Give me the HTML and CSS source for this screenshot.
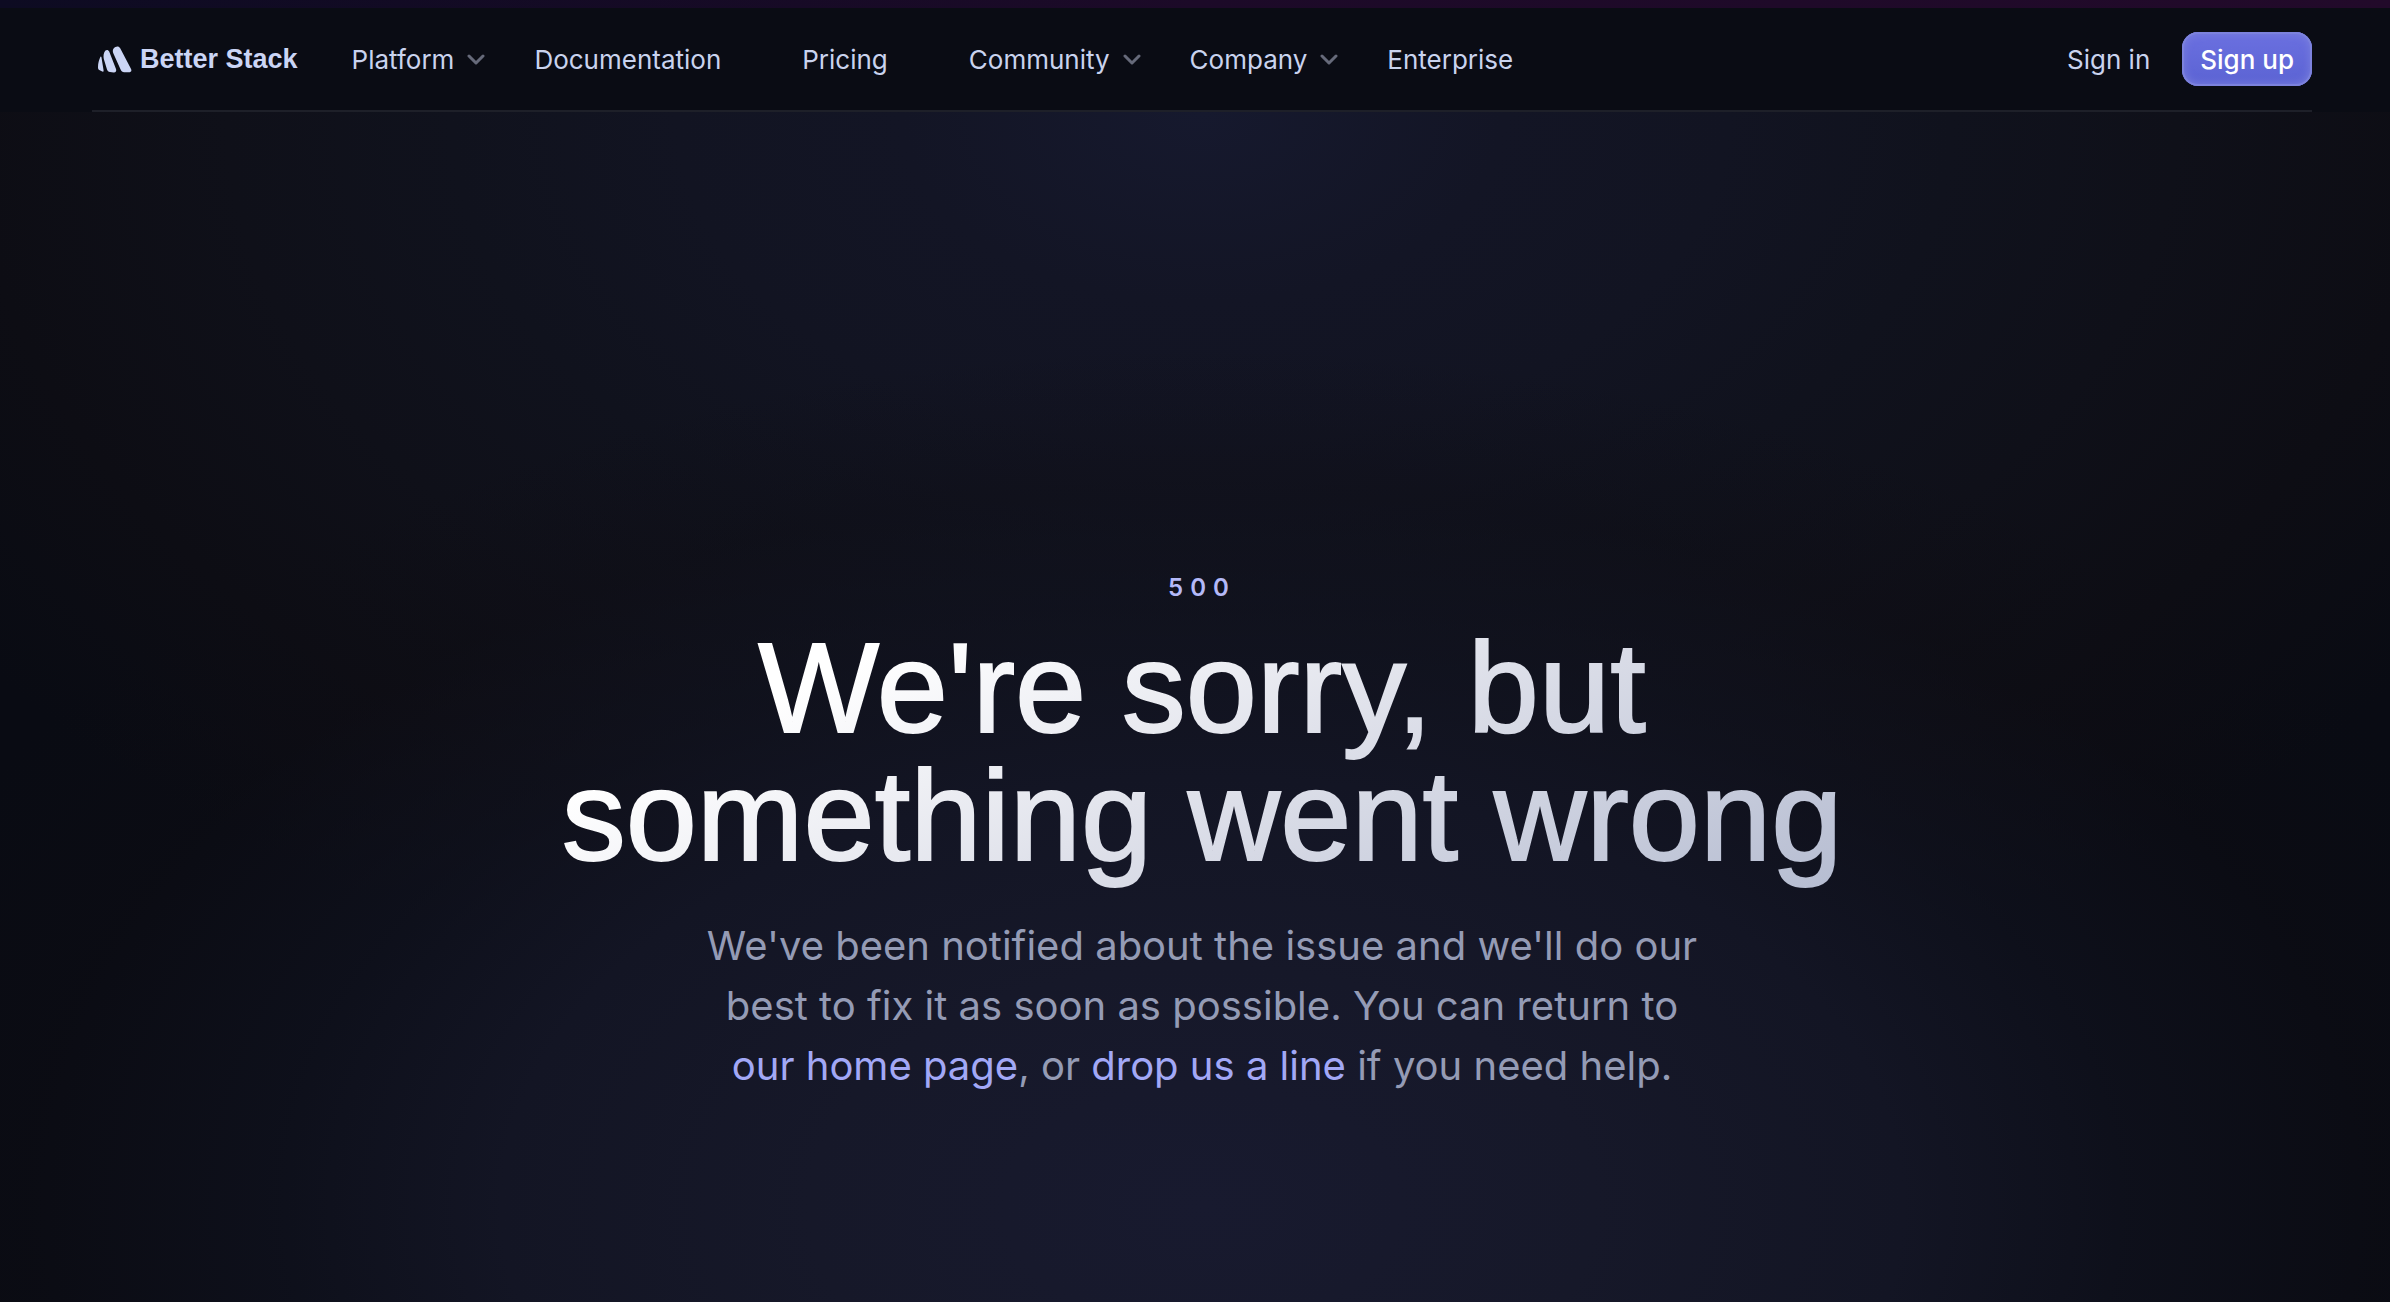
FILE: index.html
```html
<!DOCTYPE html>
<html lang="en">
<head>
    <meta charset="UTF-8">
    <meta name="viewport" content="width=device-width, initial-scale=1.0">
    <title>Better Stack</title>
    <link rel="stylesheet" href="styles.css">
</head>
<body>
    <div class="top-strip"></div>

    <header class="header">
        <div class="header-inner">
            <a href="/" class="logo">
                <svg class="logo-mark" viewBox="0 0 34 27" fill="currentColor" aria-hidden="true">
                    <path d="M2.200 11.200C2.600 10.200 3.400 10.400 3.500 11.400L5.600 24.400C5.700 25.600 5 26 4.200 25.600L1.200 24C.2 23.400 0 22.400 0 21C0 17 1 14 2.200 11.200Z"/>
                    <path d="M7.200 4.800C8.600 3.400 10.400 3.800 11.200 5.600L18 23C18.800 25 17.600 26.600 15.600 26.400L12 26C10.400 25.800 9.600 25 9 23.400L5.800 13C5.200 10 5.600 6.800 7.200 4.800Z"/>
                    <path d="M17.400 1C19.200 0 21 .2 22.200 2.200L32.800 22.600C34.200 25 33 26.200 30.600 26.200H26.200C24.400 26.200 23.400 25.400 22.600 23.600L15.400 7.400C14.200 4.800 14.800 2.600 17.400 1Z"/>
                </svg>
                <span>Better Stack</span>
            </a>
            <nav class="nav">
                <button type="button" class="nav-item has-menu">Platform
                    <svg class="chevron" viewBox="0 0 18 12" aria-hidden="true"><path d="M2 2l7 7 7-7"/></svg>
                </button>
                <a href="/docs" class="nav-item">Documentation</a>
                <a href="/pricing" class="nav-item">Pricing</a>
                <button type="button" class="nav-item has-menu">Community
                    <svg class="chevron" viewBox="0 0 18 12" aria-hidden="true"><path d="M2 2l7 7 7-7"/></svg>
                </button>
                <button type="button" class="nav-item has-menu">Company
                    <svg class="chevron" viewBox="0 0 18 12" aria-hidden="true"><path d="M2 2l7 7 7-7"/></svg>
                </button>
                <a href="/enterprise" class="nav-item">Enterprise</a>
            </nav>
            <div class="account">
                <a href="/sign-in" class="sign-in">Sign in</a>
                <a href="/sign-up" class="sign-up">Sign up</a>
            </div>
        </div>
    </header>

    <main class="error">
        <p class="error-code">500</p>
        <h1 class="error-title">We're sorry, but<br>something went wrong</h1>
        <p class="error-text">
            We've been notified about the issue and we'll do our<br>
            best to fix it as soon as possible. You can return to<br>
            <a href="/">our home page</a>, or <a href="/contact">drop us a line</a> if you need help.
        </p>
    </main>
</body>
</html>
```
FILE: styles.css
```css
* {
    box-sizing: border-box;
}

body {
    margin: 0;
    min-height: 100vh;
    display: flex;
    flex-direction: column;
    font-family: Inter, "Liberation Sans", sans-serif;
    color: #c9d3ee;
    background: #080b13;
}

a {
    color: inherit;
    text-decoration: none;
}

.top-strip {
    height: 8px;
    background: linear-gradient(90deg, #0d0b22, #1c0a28 50%, #220a2a);
}

.header {
    padding: 0 78px 0 92px;
    background: #0a0c14;
}

.header-inner {
    display: flex;
    align-items: center;
    height: 104px;
    border-bottom: 2px solid #1e2029;
}

.logo {
    display: flex;
    align-items: center;
    gap: 8px;
    margin: 0 54px 0 6px;
    font: bold 27px/32px "Liberation Sans", Arial, sans-serif;
    color: #cbd5f5;
}

.logo-mark {
    width: 34px;
    height: 27px;
}

.nav {
    display: flex;
    align-items: center;
    gap: 49px;
}

.nav-item {
    padding: 2px 0 0;
    border: none;
    background: none;
    color: #c9d3ee;
    font: 400 26px/32px Inter, "Liberation Sans", sans-serif;
}

.nav-item:not(.has-menu) {
    margin-right: 32px;
}

.has-menu {
    display: flex;
    align-items: center;
    gap: 13px;
    cursor: pointer;
}

.chevron {
    width: 18px;
    height: 12px;
    fill: none;
    stroke: #666a7a;
    stroke-width: 3;
    stroke-linecap: round;
    stroke-linejoin: round;
}

.account {
    display: flex;
    align-items: center;
    gap: 32px;
    margin-left: auto;
    font-size: 26px;
    line-height: 32px;
}

.sign-in {
    padding-top: 2px;
}

.sign-up {
    padding: 12px 18px 10px;
    border-radius: 16px;
    color: #fff;
    font-weight: 500;
    background: linear-gradient(#6b70e0, #5b63d3);
    box-shadow: inset 0 0 0 2px #7c82dd, inset 0 0 8px 2px #7a7fdd;
}

.error {
    flex: 1;
    padding: 460px 78px 0 92px;
    text-align: center;
    background:
        radial-gradient(ellipse 1400px 860px at 50.3% 92%, #181a2f, #161829 28%, #131524 50%, rgba(17, 19, 32, 0.6) 66%, rgba(14, 13, 20, 0.35) 84%, rgba(12, 13, 20, 0)),
        radial-gradient(ellipse 1500px 950px at 50.3% 0, #16192e, #131525 20%, #121422 35%, #10121d 50%, #0f1019 65%, #0d0d14 82%, #090b13);
}

.error-code {
    margin: 0;
    font-size: 24px;
    line-height: 32px;
    font-weight: 600;
    letter-spacing: 7px;
    color: #b4b9f8;
}

.error-title {
    width: fit-content;
    margin: 20px auto 0;
    padding-bottom: 24px;
    font-family: "Liberation Sans", Arial, sans-serif;
    font-size: 128px;
    line-height: 128px;
    font-weight: 400;
    color: transparent;
    background: linear-gradient(155deg, #fff 20%, #e0e2eb 52%, #b4bbd0);
    background-clip: text;
    -webkit-background-clip: text;
    -webkit-text-stroke: 2px transparent;
}

.error-text {
    margin: 12px 0 0;
    font-size: 40px;
    line-height: 60px;
    color: #949bb5;
}

.error-text a {
    color: #a2a8f6;
}
```
